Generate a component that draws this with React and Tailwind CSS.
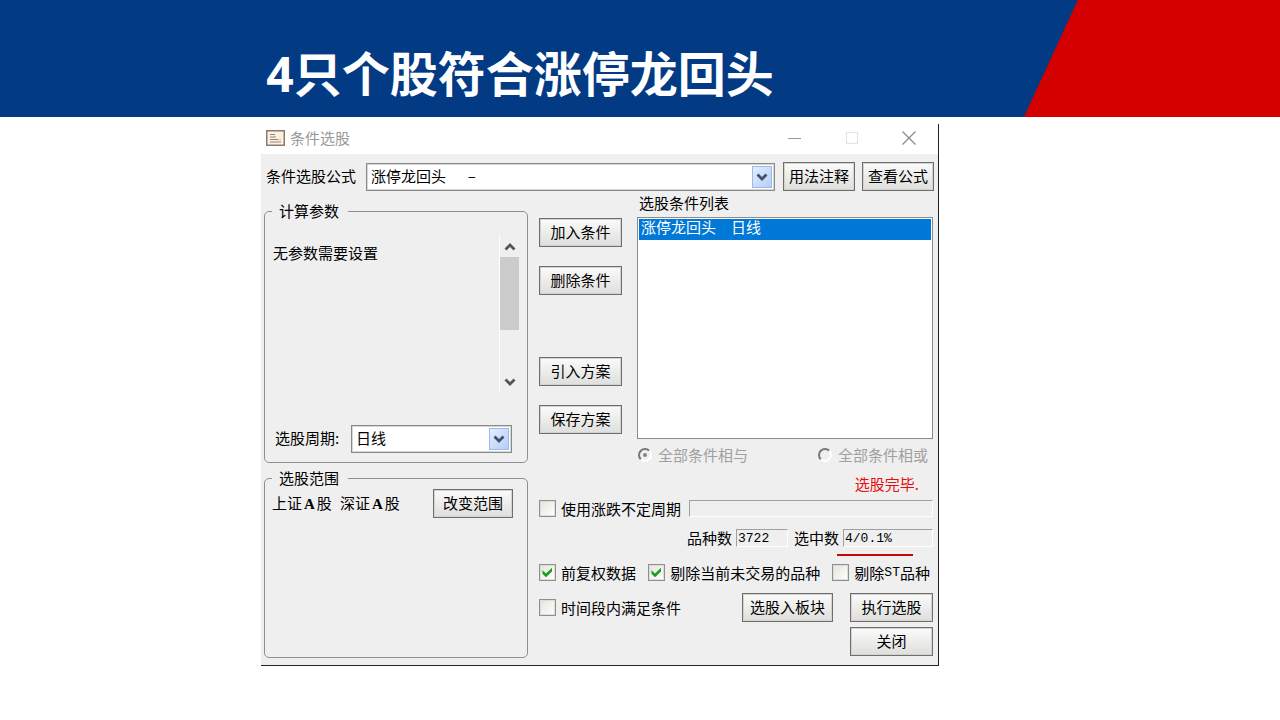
import React, { useState } from "react";

const ChevronMark = ({ up = false, className = "" }) => (
  <svg viewBox="0 0 12 8" className={className} fill="none" stroke="currentColor" strokeWidth="2.8">
    <path d={up ? "M1.5 6.5 6 2l4.5 4.5" : "M1.5 1.5 6 6l4.5-4.5"} />
  </svg>
);

const DialogIcon = () => (
  <svg viewBox="0 0 19 16" className="h-4 w-[19px]">
    <rect x="0.75" y="0.75" width="17.5" height="14.5" fill="#fbf1e2" stroke="#8f7b6b" strokeWidth="1.5" />
    <path d="M4 4.5h5M4 7h6M4 9.5h8M4 12h11" stroke="#9a8470" strokeWidth="1.2" />
    <path d="M12 9.5h3" stroke="#d8c8b4" strokeWidth="1.2" />
  </svg>
);

const PushButton = ({ children, className = "" }) => (
  <button
    type="button"
    className={`h-[29px] shrink-0 whitespace-nowrap border border-[#6f6e6a] bg-linear-to-b from-[#fbfbfb] to-[#dededc] pb-[2px] leading-4 shadow-[inset_0_0_0_1px_#d3d3d0] ${className}`}
  >
    {children}
  </button>
);

const DropDown = ({ id, options, className = "" }) => (
  <div className={`relative ${className}`}>
    <select
      id={id}
      className="block h-7 w-full appearance-none border border-[#8a8a8a] bg-white pb-[2px] pl-1 pr-6 leading-4 text-black shadow-[inset_0_0_0_1px_#d6d6d6]"
    >
      {options.map((option) => (
        <option key={option}>{option}</option>
      ))}
    </select>
    <span className="pointer-events-none absolute inset-y-[3px] right-[3px] flex w-5 items-center justify-center border border-[#9db9e8] bg-linear-to-br from-[#e4eeff] to-[#b4cdf8] text-[#3f516d]">
      <ChevronMark className="h-2 w-3" />
    </span>
  </div>
);

const CheckBox = ({ label, defaultChecked = false }) => {
  const [checked, setChecked] = useState(defaultChecked);
  return (
    <label className="flex h-[17px] shrink-0 items-center gap-[5px] whitespace-nowrap">
      <span className="relative h-[17px] w-[17px]">
        <input
          type="checkbox"
          checked={checked}
          onChange={(e) => setChecked(e.target.checked)}
          className="block h-[17px] w-[17px] appearance-none border border-[#8f8f8c] bg-linear-to-br from-[#e6e3da] to-white shadow-[inset_0_0_0_1px_#dedddb]"
        />
        {checked && (
          <svg viewBox="0 0 17 17" className="pointer-events-none absolute inset-0" fill="#1a9e1f">
            <path d="M3.5 6.2 7 9.4l6-5.6v3.8L7 13.2l-3.5-3.4z" />
          </svg>
        )}
      </span>
      <span>{label}</span>
    </label>
  );
};

const RadioOption = ({ label, defaultChecked = false }) => (
  <label className="flex items-center gap-[6px] whitespace-nowrap text-[#a0a0a0]">
    <input
      type="radio"
      name="combine"
      disabled
      defaultChecked={defaultChecked}
      className="flex h-[14px] w-[14px] appearance-none items-center justify-center rounded-full border-2 border-t-[#777777] border-r-white border-b-white border-l-[#777777] checked:before:block checked:before:h-1 checked:before:w-1 checked:before:rounded-full checked:before:bg-[#858585] checked:before:content-['']"
    />
    <span>{label}</span>
  </label>
);

const Group = ({ title, children, className = "" }) => (
  <fieldset className={`min-w-0 rounded-[5px] border border-[#8e8e8e] ${className}`}>
    <legend className="ml-[7px] h-4 pl-[7px] pr-[9px]">{title}</legend>
    {children}
  </fieldset>
);

const readOnlyField =
  "h-[18px] min-w-0 border border-t-[#a0a0a0] border-r-white border-b-white border-l-[#a0a0a0] bg-[#efefef] pl-px font-['Liberation_Mono',monospace] text-[13px] leading-none";

const TitleBar = () => (
  <div className="flex h-[30px] items-center bg-white pb-[2px] pl-[5px] text-[#999999]">
    <DialogIcon />
    <span className="ml-[5px] pb-px">条件选股</span>
    <div className="mr-px ml-auto flex h-full">
      <button type="button" aria-label="最小化" className="flex w-[57px] items-center justify-center">
        <svg viewBox="0 0 14 14" className="h-[14px] w-[14px]" stroke="#999999">
          <path d="M0 7.5h13" />
        </svg>
      </button>
      <button type="button" aria-label="最大化" disabled className="flex w-[57px] items-center justify-center">
        <svg viewBox="0 0 14 14" className="h-[14px] w-[14px]" stroke="#e2e2e2" fill="none">
          <rect x="1.5" y="1.5" width="11" height="11" />
        </svg>
      </button>
      <button type="button" aria-label="关闭窗口" className="flex w-[57px] items-center justify-center">
        <svg viewBox="0 0 14 14" className="h-[14px] w-[14px]" stroke="#888888" strokeWidth="1.2">
          <path d="m.5.5 13 13m0-13-13 13" />
        </svg>
      </button>
    </div>
  </div>
);

const ParameterGroup = () => (
  <Group title="计算参数">
    <div className="mt-[17px] flex h-[156px] pl-2 pr-[7px]">
      <p className="mt-[9px] flex-1">无参数需要设置</p>
      <div className="flex w-[21px] flex-col items-center border-l border-white pr-px text-[#555555]">
        <ChevronMark up className="mt-[7px] h-2 w-3 shrink-0" />
        <div className="mt-[6px] h-[73px] w-full bg-[#cbcbcb]" />
        <ChevronMark className="mt-auto mb-[6px] h-2 w-3 shrink-0" />
      </div>
    </div>
    <div className="mt-[33px] mb-[9px] flex items-center pl-[10px] pr-[15px]">
      <label htmlFor="period" className="w-[76px] shrink-0 pb-[3px]">
        选股周期:
      </label>
      <DropDown id="period" options={["日线", "周线", "月线"]} className="flex-1" />
    </div>
  </Group>
);

const ScopeGroup = () => (
  <Group title="选股范围" className="mt-[7px] flex-1">
    <div className="mt-[3px] flex items-center justify-between pl-[7px] pr-[14px]">
      <p className="whitespace-nowrap">
        上证<b className="px-[2px] font-['Liberation_Serif',serif]">A</b>股
        <span className="ml-2">
          深证<b className="px-[2px] font-['Liberation_Serif',serif]">A</b>股
        </span>
      </p>
      <PushButton className="w-20">改变范围</PushButton>
    </div>
  </Group>
);

const ConditionPanel = () => (
  <div className="flex gap-[15px]">
    <div className="flex w-[83px] shrink-0 flex-col gap-[19px] pt-[23px]">
      <PushButton>加入条件</PushButton>
      <PushButton>删除条件</PushButton>
      <PushButton className="mt-[43px]">引入方案</PushButton>
      <PushButton>保存方案</PushButton>
    </div>
    <div className="flex-1">
      <h2 id="condition-list" className="pl-[2px]">
        选股条件列表
      </h2>
      <ul
        role="listbox"
        aria-labelledby="condition-list"
        className="mt-[6px] h-[222px] border border-[#8a8a8a] bg-white p-px"
      >
        <li role="option" aria-selected="true" className="h-[21px] bg-[#0078d7] pl-[2px] leading-4 text-white">
          涨停龙回头　日线
        </li>
      </ul>
      <div className="mt-2 flex justify-between pr-[5px] pl-[1px]">
        <RadioOption label="全部条件相与" defaultChecked />
        <RadioOption label="全部条件相或" />
      </div>
    </div>
  </div>
);

const RunPanel = () => (
  <>
    <p className="mt-[13px] pr-[14px] text-right text-[#e80c0c]">选股完毕.</p>
    <div className="mt-2 flex h-[17px] items-center gap-2">
      <CheckBox label="使用涨跌不定周期" />
      <div
        role="progressbar"
        aria-label="选股进度"
        className="h-[17px] flex-1 border border-t-[#a0a0a0] border-r-white border-b-white border-l-[#a0a0a0]"
      />
    </div>
    <div className="mt-3 flex h-[18px] items-center justify-end">
      <label htmlFor="total">品种数</label>
      <input id="total" readOnly value="3722" className={`ml-1 w-[52px] ${readOnlyField}`} />
      <label htmlFor="matched" className="ml-[6px]">
        选中数
      </label>
      <div className="relative ml-1 w-[90px]">
        <input id="matched" readOnly value="4/0.1%" className={`block w-full ${readOnlyField}`} />
        <span className="absolute top-[25px] -left-[6px] h-[2px] w-[76px] bg-[#c00808]" />
      </div>
    </div>
    <div className="mt-[17px] flex h-[17px] items-center justify-between pr-[3px]">
      <CheckBox label="前复权数据" defaultChecked />
      <CheckBox label="剔除当前未交易的品种" defaultChecked />
      <CheckBox
        label={
          <span className="flex items-center">
            剔除<span className="font-['Liberation_Mono',monospace] text-[13px]">ST</span>品种
          </span>
        }
      />
    </div>
    <div className="mt-3 flex items-center">
      <CheckBox label="时间段内满足条件" />
      <PushButton className="ml-auto w-[91px]">选股入板块</PushButton>
      <PushButton className="ml-[17px] w-[83px]">执行选股</PushButton>
    </div>
    <div className="mt-[5px] flex justify-end">
      <PushButton className="w-[83px]">关闭</PushButton>
    </div>
  </>
);

const StockPickerDialog = () => (
  <section className="border-r border-b border-[#222222] bg-[#efefef] font-['Noto_Sans_CJK_SC',sans-serif] text-[15px] leading-4 text-black">
    <TitleBar />
    <div className="flex items-center pt-2 pr-1 pl-[5px]">
      <label htmlFor="formula" className="shrink-0 pb-[2px]">
        条件选股公式
      </label>
      <DropDown id="formula" options={["涨停龙回头　\u00a0\u00a0–"]} className="ml-[10px] flex-1" />
      <PushButton className="ml-2 w-[72px]">用法注释</PushButton>
      <PushButton className="ml-[7px] w-[72px]">查看公式</PushButton>
    </div>
    <div className="mt-1 grid grid-cols-[264fr_394fr] gap-[11px] pr-[5px] pb-[7px] pl-[3px]">
      <div className="flex flex-col pt-2">
        <ParameterGroup />
        <ScopeGroup />
      </div>
      <div className="pb-[2px]">
        <ConditionPanel />
        <RunPanel />
      </div>
    </div>
  </section>
);

const App = () => (
  <div className="min-h-screen bg-white">
    <header className="flex h-[117px] justify-between bg-[#023a84]">
      <h1 className="ml-[20.8%] self-center whitespace-nowrap pt-[30px] font-['Open_Sans','Noto_Sans_CJK_SC',sans-serif] text-5xl font-bold text-white">
        4只个股符合涨停龙回头
      </h1>
      <div className="w-[20%] bg-[#d40000] [clip-path:polygon(21%_0,100%_0,100%_100%,0_100%)]" />
    </header>
    <main className="grid grid-cols-[261fr_678fr_341fr] pt-[7px]">
      <div className="col-start-2">
        <StockPickerDialog />
      </div>
    </main>
  </div>
);

export default App;
